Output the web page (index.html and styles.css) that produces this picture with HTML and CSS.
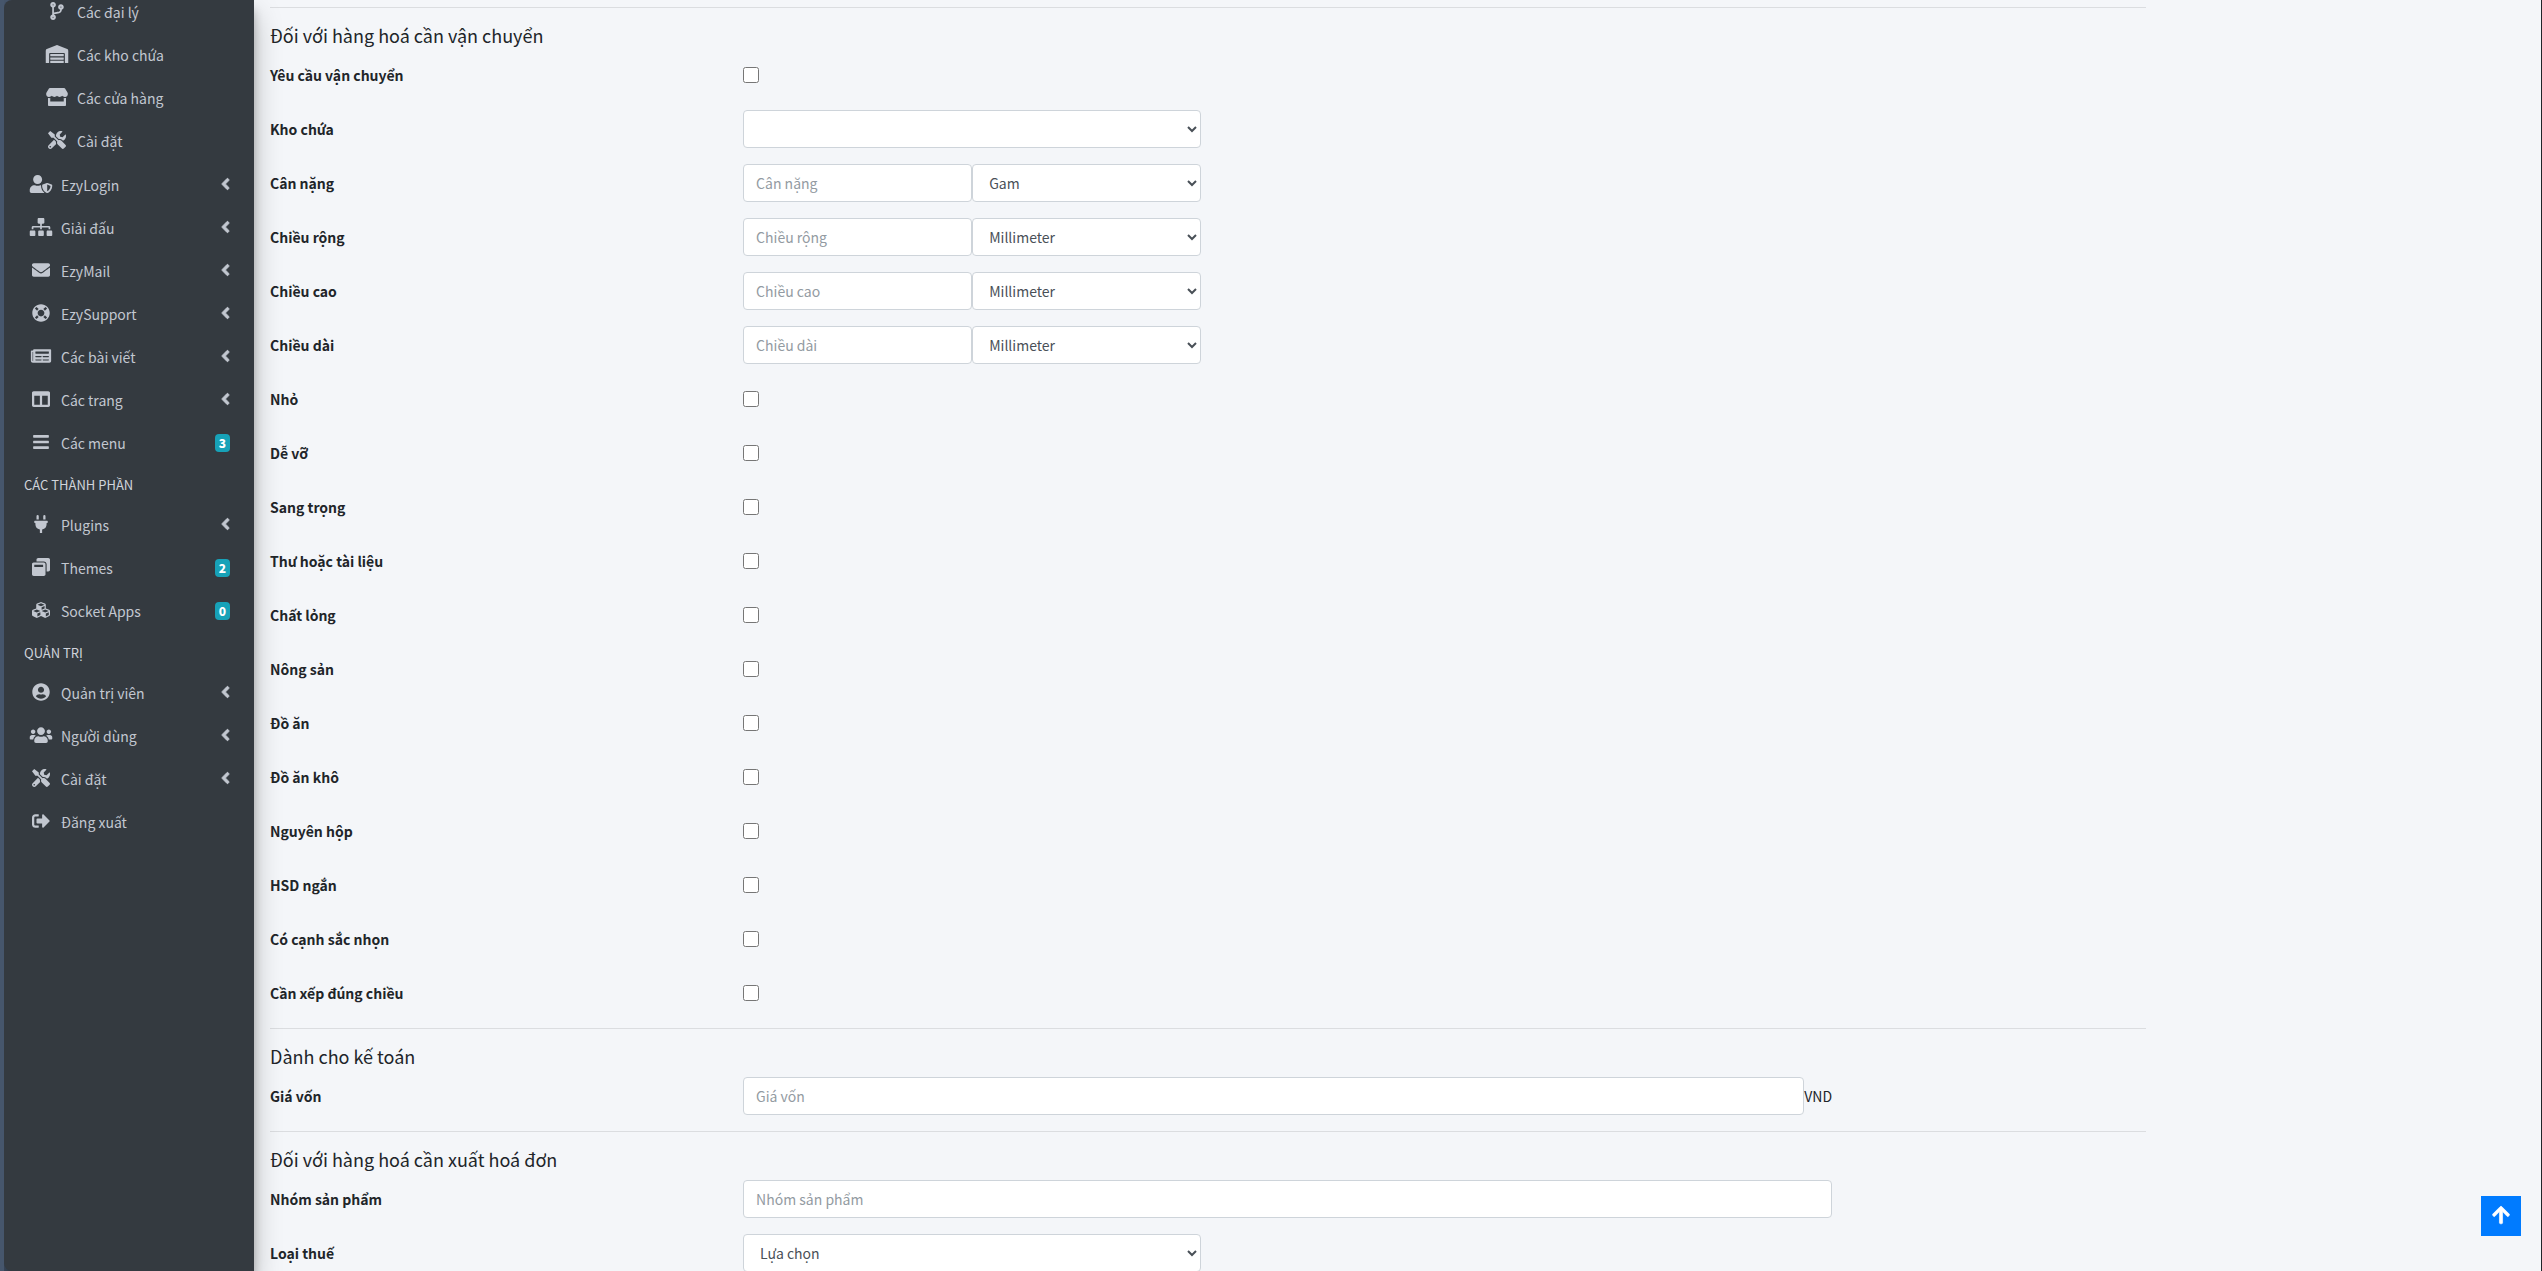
FILE: index.html
```html
<!DOCTYPE html>
<html lang="vi">
<head>
<meta charset="utf-8">
<meta name="viewport" content="width=device-width, initial-scale=1">
<title>Sản phẩm</title>
<link rel="stylesheet" href="styles.css">
</head>
<body>

<!-- icon sprite -->
<svg class="sprite" xmlns="http://www.w3.org/2000/svg">
  <symbol id="i-branch" viewBox="0 0 384 512"><path d="M384 144c0-44.200-35.800-80-80-80s-80 35.800-80 80c0 36.400 24.300 67.100 57.500 76.800-.6 16.100-4.200 28.500-11 36.900-15.400 19.200-49.300 22.400-85.200 25.700-28.200 2.600-57.400 5.400-81.300 16.900v-144c32.500-10.200 56-40.500 56-76.300 0-44.200-35.800-80-80-80S0 35.800 0 80c0 35.800 23.500 66.100 56 76.300v199.300C23.500 365.900 0 396.200 0 432c0 44.200 35.800 80 80 80s80-35.800 80-80c0-34-21.200-63.100-51.200-74.600 3.100-5.200 7.800-9.800 14.900-13.400 16.200-8.200 40.400-10.400 66.100-12.800 42.200-3.900 90-8.400 118.200-43.400 14-17.400 21.100-39.800 21.600-67.900 31.600-10.800 54.400-40.700 54.400-75.900zM80 64c8.800 0 16 7.200 16 16s-7.200 16-16 16-16-7.200-16-16 7.200-16 16-16zm0 384c-8.800 0-16-7.200-16-16s7.200-16 16-16 16 7.200 16 16-7.200 16-16 16zm224-320c8.800 0 16 7.200 16 16s-7.200 16-16 16-16-7.200-16-16 7.200-16 16-16z"/></symbol>
  <symbol id="i-warehouse" viewBox="0 0 640 512"><path d="M504 352H136.400c-4.400 0-8 3.600-8 8l-.1 48c0 4.400 3.600 8 8 8H504c4.400 0 8-3.600 8-8v-48c0-4.400-3.600-8-8-8zm0 96H136.100c-4.400 0-8 3.600-8 8l-.1 48c0 4.400 3.600 8 8 8h368c4.400 0 8-3.600 8-8v-48c0-4.400-3.600-8-8-8zm0-192H136.600c-4.400 0-8 3.600-8 8l-.1 48c0 4.400 3.600 8 8 8H504c4.400 0 8-3.600 8-8v-48c0-4.400-3.600-8-8-8zm106.500-139L338.400 3.700a48.150 48.150 0 0 0-36.900 0L29.500 117C11.700 124.500 0 141.900 0 161.300V504c0 4.400 3.600 8 8 8h80c4.400 0 8-3.600 8-8V256c0-17.600 14.600-32 32.600-32h382.800c18 0 32.600 14.400 32.600 32v248c0 4.400 3.600 8 8 8h80c4.400 0 8-3.600 8-8V161.300c0-19.400-11.700-36.800-29.500-44.300z"/></symbol>
  <symbol id="i-store" viewBox="0 0 616 512"><path d="M602 118.600L537.100 15C531.300 5.700 521 0 510 0H106C95 0 84.700 5.700 78.900 15L14 118.600c-33.500 53.500-3.800 127.900 58.800 136.400 4.500.6 9.100.9 13.700.9 29.600 0 55.800-13 73.800-33.100 18 20.100 44.300 33.100 73.800 33.100 29.600 0 55.800-13 73.800-33.100 18 20.100 44.300 33.100 73.800 33.100 29.600 0 55.800-13 73.800-33.100 18.100 20.100 44.300 33.100 73.800 33.100 4.700 0 9.200-.3 13.700-.9 62.800-8.400 92.600-82.800 59-136.400zM529.500 288c-10 0-19.900-1.500-29.500-3.800V384H116v-99.800c-9.600 2.200-19.500 3.800-29.500 3.800-6 0-12.100-.4-18-1.200-5.600-.8-11.100-2.100-16.400-3.600V480c0 17.700 14.300 32 32 32h448c17.700 0 32-14.300 32-32V283.200c-5.400 1.600-10.800 2.900-16.400 3.600-6.100.8-12.100 1.200-18.200 1.200z"/></symbol>
  <symbol id="i-tools" viewBox="0 0 512 512"><path d="M501.100 395.700L384 278.600c-23.100-23.100-57.600-27.600-85.400-13.900L192 158.100V96L64 0 0 64l96 128h62.100l106.600 106.600c-13.600 27.800-9.200 62.300 13.900 85.400l117.100 117.100c14.600 14.600 38.200 14.600 52.700 0l52.700-52.700c14.500-14.600 14.500-38.200 0-52.700zM331.700 225c28.300 0 54.900 11 74.900 31l19.400 19.400c15.800-6.900 30.800-16.500 43.800-29.500 37.100-37.100 49.700-89.300 37.900-136.700-2.200-9-13.500-12.100-20.100-5.500l-74.400 74.400-67.900-11.300L334 98.900l74.400-74.400c6.600-6.600 3.400-17.900-5.700-20.200-47.400-11.700-99.600.9-136.600 37.900-28.500 28.500-41.900 66.100-41.200 103.600l82.100 82.100c8.100-1.900 16.500-2.900 24.700-2.900zm-103.900 82l-56.700-56.700L18.700 402.800c-25 25-25 65.500 0 90.500s65.500 25 90.500 0l123.600-123.600c-7.600-19.900-9.900-41.600-5-62.700zM64 472c-13.200 0-24-10.800-24-24 0-13.300 10.700-24 24-24s24 10.700 24 24c0 13.200-10.700 24-24 24z"/></symbol>
  <symbol id="i-user-shield" viewBox="0 0 640 512"><path d="M622.300 271.100l-115.200-45c-4.100-1.600-12.600-3.700-22.200 0l-115.200 45c-10.700 4.200-17.700 14-17.700 24.900 0 111.600 68.700 188.800 132.900 213.900 9.600 3.700 18 1.600 22.200 0C558.400 489.900 640 420.500 640 296c0-10.900-7-20.700-17.700-24.900zM496 462.400V273.300l95.500 37.300c-5.600 87.100-60.900 135.400-95.500 151.800zM224 256c70.700 0 128-57.300 128-128S294.700 0 224 0 96 57.300 96 128s57.300 128 128 128zm96 40c0-2.500.8-4.800 1.100-7.200-2.500-.1-4.900-.8-7.500-.8h-16.700c-22.200 10.200-46.900 16-72.900 16s-50.600-5.800-72.900-16h-16.700C60.200 288 0 348.200 0 422.400V464c0 26.500 21.500 48 48 48h352c6.800 0 13.300-1.500 19.200-4-54-42.900-99.200-116.700-99.200-212z"/></symbol>
  <symbol id="i-sitemap" viewBox="0 0 640 512"><path d="M128 352H32c-17.670 0-32 14.330-32 32v96c0 17.670 14.330 32 32 32h96c17.670 0 32-14.330 32-32v-96c0-17.670-14.330-32-32-32zm-24-80h192v48h48v-48h192v48h48v-57.590c0-21.170-17.230-38.410-38.410-38.410H344v-64h40c17.670 0 32-14.330 32-32V32c0-17.670-14.330-32-32-32H256c-17.670 0-32 14.330-32 32v96c0 17.670 14.330 32 32 32h40v64H94.410C73.230 224 56 241.230 56 262.410V320h48v-48zm264 80h-96c-17.670 0-32 14.330-32 32v96c0 17.670 14.330 32 32 32h96c17.670 0 32-14.330 32-32v-96c0-17.670-14.330-32-32-32zm240 0h-96c-17.670 0-32 14.330-32 32v96c0 17.670 14.330 32 32 32h96c17.670 0 32-14.330 32-32v-96c0-17.670-14.330-32-32-32z"/></symbol>
  <symbol id="i-mail" viewBox="0 0 512 512"><path d="M502.300 190.800c3.900-3.100 9.700-.2 9.700 4.700V400c0 26.500-21.500 48-48 48H48c-26.500 0-48-21.500-48-48V195.600c0-5 5.700-7.800 9.700-4.700 22.400 17.400 52.100 39.500 154.100 113.600 21.100 15.400 56.700 47.800 92.200 47.600 35.700.3 72-32.800 92.300-47.600 102-74.100 131.600-96.300 154-113.700zM256 320c23.200.4 56.600-29.200 73.400-41.400 132.700-96.300 142.800-104.700 173.400-128.700 5.800-4.500 9.200-11.500 9.200-18.900v-19c0-26.500-21.500-48-48-48H48c-26.500 0-48 21.500-48 48v19c0 7.400 3.400 14.300 9.200 18.900 30.600 23.900 40.700 32.400 173.400 128.700 16.800 12.200 50.200 41.800 73.400 41.400z"/></symbol>
  <symbol id="i-ring" viewBox="0 0 512 512"><path d="M256 8C119.033 8 8 119.033 8 256s111.033 248 248 248 248-111.033 248-248S392.967 8 256 8zm173.696 119.559l-63.399 63.399c-10.987-18.559-26.670-34.252-45.255-45.255l63.399-63.399a218.396 218.396 0 0 1 45.255 45.255zM256 352c-53.019 0-96-42.981-96-96s42.981-96 96-96 96 42.981 96 96-42.981 96-96 96zM127.559 82.304l63.399 63.399c-18.559 10.987-34.252 26.670-45.255 45.255l-63.399-63.399a218.372 218.372 0 0 1 45.255-45.255zM82.304 384.441l63.399-63.399c10.987 18.559 26.670 34.252 45.255 45.255l-63.399 63.399a218.396 218.396 0 0 1-45.255-45.255zm302.137 45.255l-63.399-63.399c18.559-10.987 34.252-26.670 45.255-45.255l63.399 63.399a218.403 218.403 0 0 1-45.255 45.255z"/></symbol>
  <symbol id="i-news" viewBox="0 0 576 512"><path d="M552 64H88c-13.255 0-24 10.745-24 24v8H24c-13.255 0-24 10.745-24 24v272c0 30.928 25.072 56 56 56h472c26.510 0 48-21.490 48-48V88c0-13.255-10.745-24-24-24zM56 400a8 8 0 0 1-8-8V144h16v248a8 8 0 0 1-8 8zm236-16H140c-6.627 0-12-5.373-12-12v-8c0-6.627 5.373-12 12-12h152c6.627 0 12 5.373 12 12v8c0 6.627-5.373 12-12 12zm208 0H348c-6.627 0-12-5.373-12-12v-8c0-6.627 5.373-12 12-12h152c6.627 0 12 5.373 12 12v8c0 6.627-5.373 12-12 12zm-208-96H140c-6.627 0-12-5.373-12-12v-8c0-6.627 5.373-12 12-12h152c6.627 0 12 5.373 12 12v8c0 6.627-5.373 12-12 12zm208 0H348c-6.627 0-12-5.373-12-12v-8c0-6.627 5.373-12 12-12h152c6.627 0 12 5.373 12 12v8c0 6.627-5.373 12-12 12zm0-96H140c-6.627 0-12-5.373-12-12v-40c0-6.627 5.373-12 12-12h360c6.627 0 12 5.373 12 12v40c0 6.627-5.373 12-12 12z"/></symbol>
  <symbol id="i-columns" viewBox="0 0 512 512"><path d="M464 32H48C21.490 32 0 53.490 0 80v352c0 26.510 21.490 48 48 48h416c26.510 0 48-21.490 48-48V80c0-26.510-21.490-48-48-48zM224 416H64V160h160v256zm224 0H288V160h160v256z"/></symbol>
  <symbol id="i-bars" viewBox="0 0 448 512"><path d="M16 132h416c8.837 0 16-7.163 16-16V76c0-8.837-7.163-16-16-16H16C7.163 60 0 67.163 0 76v40c0 8.837 7.163 16 16 16zm0 160h416c8.837 0 16-7.163 16-16v-40c0-8.837-7.163-16-16-16H16c-8.837 0-16 7.163-16 16v40c0 8.837 7.163 16 16 16zm0 160h416c8.837 0 16-7.163 16-16v-40c0-8.837-7.163-16-16-16H16c-8.837 0-16 7.163-16 16v40c0 8.837 7.163 16 16 16z"/></symbol>
  <symbol id="i-plug" viewBox="0 0 384 512"><path d="M320 32a32 32 0 0 0-64 0v96h64zm48 128H16a16 16 0 0 0-16 16v32a16 16 0 0 0 16 16h16v32a160.070 160.070 0 0 0 128 156.800V512h64v-99.200A160.070 160.070 0 0 0 352 256v-32h16a16 16 0 0 0 16-16v-32a16 16 0 0 0-16-16zM128 32a32 32 0 0 0-64 0v96h64z"/></symbol>
  <symbol id="i-windows" viewBox="0 0 512 512"><path d="M512 48v288c0 26.500-21.500 48-48 48h-48V176c0-44.100-35.900-80-80-80H128V48c0-26.500 21.500-48 48-48h288c26.500 0 48 21.500 48 48zM384 176v288c0 26.500-21.500 48-48 48H48c-26.500 0-48-21.500-48-48V176c0-26.500 21.500-48 48-48h288c26.500 0 48 21.500 48 48zm-68 28c0-6.600-5.400-12-12-12H76c-6.600 0-12 5.400-12 12v52h252v-52z"/></symbol>
  <symbol id="i-cubes" viewBox="0 0 512 512"><path d="M488.600 250.200L392 214V105.500c0-15-9.300-28.400-23.400-33.700l-100-37.500c-8.100-3.100-17.100-3.100-25.300 0l-100 37.500c-14.100 5.300-23.400 18.700-23.400 33.700V214l-96.600 36.200C9.300 255.500 0 268.900 0 283.900V394c0 13.600 7.700 26.100 19.900 32.200l100 50c10.100 5.100 22.100 5.100 32.200 0l103.900-52 103.900 52c10.100 5.100 22.100 5.100 32.200 0l100-50c12.200-6.100 19.900-18.600 19.900-32.200V283.900c0-15-9.300-28.400-23.400-33.700zM358 214.800l-85 31.900v-68.200l85-37v73.300zM154 104.100l102-38.200 102 38.200v.6l-102 41.400-102-41.400v-.6zm84 291.100l-85 42.500v-79.100l85-38.800v75.400zm0-112l-102 41.400-102-41.400v-.6l102-38.200 102 38.200v.6zm240 112l-85 42.500v-79.100l85-38.800v75.400zm0-112l-102 41.400-102-41.400v-.6l102-38.200 102 38.200v.6z"/></symbol>
  <symbol id="i-user" viewBox="0 0 496 512"><path d="M248 8C111 8 0 119 0 256s111 248 248 248 248-111 248-248S385 8 248 8zm0 96c48.600 0 88 39.400 88 88s-39.400 88-88 88-88-39.400-88-88 39.400-88 88-88zm0 344c-58.700 0-111.300-26.600-146.500-68.200 18.800-35.400 55.600-59.800 98.500-59.800 2.400 0 4.800.4 7.100 1.100 13 4.200 26.600 6.900 40.900 6.900 14.300 0 28-2.700 40.900-6.900 2.300-.7 4.700-1.100 7.100-1.100 42.900 0 79.700 24.400 98.500 59.800C359.300 421.400 306.700 448 248 448z"/></symbol>
  <symbol id="i-users" viewBox="0 0 640 512"><path d="M96 224c35.300 0 64-28.700 64-64s-28.700-64-64-64-64 28.700-64 64 28.700 64 64 64zm448 0c35.300 0 64-28.700 64-64s-28.700-64-64-64-64 28.700-64 64 28.700 64 64 64zm32 32h-64c-17.600 0-33.500 7.100-45.100 18.600 40.300 22.100 68.900 62 75.100 109.400h66c17.700 0 32-14.300 32-32v-32c0-35.300-28.700-64-64-64zm-256 0c61.900 0 112-50.100 112-112S381.900 32 320 32 208 82.100 208 144s50.100 112 112 112zm76.800 32h-8.300c-20.800 10-43.900 16-68.500 16s-47.600-6-68.500-16h-8.300C179.600 288 128 339.600 128 403.200V432c0 26.500 21.500 48 48 48h288c26.500 0 48-21.500 48-48v-28.800c0-63.600-51.600-115.200-115.200-115.200zm-223.700-13.400C161.500 263.100 145.600 256 128 256H64c-35.300 0-64 28.700-64 64v32c0 17.700 14.300 32 32 32h65.900c6.300-47.400 34.900-87.300 75.200-109.400z"/></symbol>
  <symbol id="i-signout" viewBox="0 0 512 512"><path d="M497 273L329 441c-15 15-41 4.500-41-17v-96H152c-13.300 0-24-10.700-24-24v-96c0-13.300 10.700-24 24-24h136V88c0-21.400 25.900-32 41-17l168 168c9.300 9.400 9.300 24.600 0 34zM192 436v-40c0-6.600-5.400-12-12-12H96c-17.700 0-32-14.300-32-32V160c0-17.700 14.300-32 32-32h84c6.600 0 12-5.400 12-12V76c0-6.600-5.400-12-12-12H96c-53 0-96 43-96 96v192c0 53 43 96 96 96h84c6.600 0 12-5.400 12-12z"/></symbol>
  <symbol id="i-angle" viewBox="0 0 256 512"><path d="M31.700 239l136-136c9.400-9.400 24.600-9.400 33.900 0l22.600 22.600c9.400 9.400 9.400 24.600 0 33.900L127.900 256l96.400 96.400c9.400 9.400 9.400 24.600 0 33.900L201.700 409c-9.400 9.400-24.600 9.400-33.900 0l-136-136c-9.500-9.400-9.500-24.600-.1-34z"/></symbol>
  <symbol id="i-up" viewBox="0 0 448 512"><path d="M34.900 289.500l-22.200-22.200c-9.400-9.400-9.400-24.600 0-33.900L207 39c9.400-9.400 24.600-9.400 33.900 0l194.300 194.300c9.400 9.400 9.400 24.600 0 33.900L413 289.400c-9.500 9.500-25 9.300-34.300-.4L264 168.600V456c0 13.300-10.700 24-24 24h-32c-13.300 0-24-10.700-24-24V168.600L69.200 289.100c-9.300 9.800-24.800 10-34.300.4z"/></symbol>
</svg>

<div class="wrapper">
  <aside class="sidebar">
    <nav>
      <ul class="nav nav-sub">
        <li><a class="nav-link" href="#"><svg class="icon"><use href="#i-branch"/></svg><span>Các đại lý</span></a></li>
        <li><a class="nav-link" href="#"><svg class="icon"><use href="#i-warehouse"/></svg><span>Các kho chứa</span></a></li>
        <li><a class="nav-link" href="#"><svg class="icon"><use href="#i-store"/></svg><span>Các cửa hàng</span></a></li>
        <li><a class="nav-link" href="#"><svg class="icon"><use href="#i-tools"/></svg><span>Cài đặt</span></a></li>
      </ul>
      <ul class="nav">
        <li><a class="nav-link" href="#"><svg class="icon"><use href="#i-user-shield"/></svg><span>EzyLogin</span><svg class="angle"><use href="#i-angle"/></svg></a></li>
        <li><a class="nav-link" href="#"><svg class="icon"><use href="#i-sitemap"/></svg><span>Giải đấu</span><svg class="angle"><use href="#i-angle"/></svg></a></li>
        <li><a class="nav-link" href="#"><svg class="icon"><use href="#i-mail"/></svg><span>EzyMail</span><svg class="angle"><use href="#i-angle"/></svg></a></li>
        <li><a class="nav-link" href="#"><svg class="icon"><use href="#i-ring"/></svg><span>EzySupport</span><svg class="angle"><use href="#i-angle"/></svg></a></li>
        <li><a class="nav-link" href="#"><svg class="icon"><use href="#i-news"/></svg><span>Các bài viết</span><svg class="angle"><use href="#i-angle"/></svg></a></li>
        <li><a class="nav-link" href="#"><svg class="icon"><use href="#i-columns"/></svg><span>Các trang</span><svg class="angle"><use href="#i-angle"/></svg></a></li>
        <li><a class="nav-link" href="#"><svg class="icon"><use href="#i-bars"/></svg><span>Các menu</span><b class="badge">3</b></a></li>
        <li class="nav-header">CÁC THÀNH PHẦN</li>
        <li><a class="nav-link" href="#"><svg class="icon"><use href="#i-plug"/></svg><span>Plugins</span><svg class="angle"><use href="#i-angle"/></svg></a></li>
        <li><a class="nav-link" href="#"><svg class="icon"><use href="#i-windows"/></svg><span>Themes</span><b class="badge">2</b></a></li>
        <li><a class="nav-link" href="#"><svg class="icon"><use href="#i-cubes"/></svg><span>Socket Apps</span><b class="badge">0</b></a></li>
        <li class="nav-header">QUẢN TRỊ</li>
        <li><a class="nav-link" href="#"><svg class="icon"><use href="#i-user"/></svg><span>Quản trị viên</span><svg class="angle"><use href="#i-angle"/></svg></a></li>
        <li><a class="nav-link" href="#"><svg class="icon"><use href="#i-users"/></svg><span>Người dùng</span><svg class="angle"><use href="#i-angle"/></svg></a></li>
        <li><a class="nav-link" href="#"><svg class="icon"><use href="#i-tools"/></svg><span>Cài đặt</span><svg class="angle"><use href="#i-angle"/></svg></a></li>
        <li><a class="nav-link" href="#"><svg class="icon"><use href="#i-signout"/></svg><span>Đăng xuất</span></a></li>
      </ul>
    </nav>
  </aside>

  <main class="content">
    <form class="product-form">
      <section class="form-section">
        <h5>Đối với hàng hoá cần vận chuyển</h5>
        <div class="form-row"><label for="shipping">Yêu cầu vận chuyển</label><div class="field"><input type="checkbox" id="shipping"></div></div>
        <div class="form-row"><label for="warehouse">Kho chứa</label><div class="field"><select class="form-control" id="warehouse"><option></option></select></div></div>
        <div class="form-row">
          <label for="weight">Cân nặng</label>
          <div class="field">
            <input class="form-control" type="text" id="weight" placeholder="Cân nặng">
            <select class="form-control" aria-label="Cân nặng"><option>Gam</option></select>
          </div>
        </div>
        <div class="form-row">
          <label for="width">Chiều rộng</label>
          <div class="field">
            <input class="form-control" type="text" id="width" placeholder="Chiều rộng">
            <select class="form-control" aria-label="Chiều rộng"><option>Millimeter</option></select>
          </div>
        </div>
        <div class="form-row">
          <label for="height">Chiều cao</label>
          <div class="field">
            <input class="form-control" type="text" id="height" placeholder="Chiều cao">
            <select class="form-control" aria-label="Chiều cao"><option>Millimeter</option></select>
          </div>
        </div>
        <div class="form-row">
          <label for="length">Chiều dài</label>
          <div class="field">
            <input class="form-control" type="text" id="length" placeholder="Chiều dài">
            <select class="form-control" aria-label="Chiều dài"><option>Millimeter</option></select>
          </div>
        </div>
        <div class="form-row"><label for="small">Nhỏ</label><div class="field"><input type="checkbox" id="small"></div></div>
        <div class="form-row"><label for="fragile">Dễ vỡ</label><div class="field"><input type="checkbox" id="fragile"></div></div>
        <div class="form-row"><label for="luxury">Sang trọng</label><div class="field"><input type="checkbox" id="luxury"></div></div>
        <div class="form-row"><label for="document">Thư hoặc tài liệu</label><div class="field"><input type="checkbox" id="document"></div></div>
        <div class="form-row"><label for="liquid">Chất lỏng</label><div class="field"><input type="checkbox" id="liquid"></div></div>
        <div class="form-row"><label for="agricultural">Nông sản</label><div class="field"><input type="checkbox" id="agricultural"></div></div>
        <div class="form-row"><label for="food">Đồ ăn</label><div class="field"><input type="checkbox" id="food"></div></div>
        <div class="form-row"><label for="dry-food">Đồ ăn khô</label><div class="field"><input type="checkbox" id="dry-food"></div></div>
        <div class="form-row"><label for="full-box">Nguyên hộp</label><div class="field"><input type="checkbox" id="full-box"></div></div>
        <div class="form-row"><label for="short-expiry">HSD ngắn</label><div class="field"><input type="checkbox" id="short-expiry"></div></div>
        <div class="form-row"><label for="sharp">Có cạnh sắc nhọn</label><div class="field"><input type="checkbox" id="sharp"></div></div>
        <div class="form-row"><label for="upright">Cần xếp đúng chiều</label><div class="field"><input type="checkbox" id="upright"></div></div>
      </section>

      <section class="form-section">
        <h5>Dành cho kế toán</h5>
        <div class="form-row"><label for="cost">Giá vốn</label><div class="field field-wide"><input class="form-control" type="text" id="cost" placeholder="Giá vốn"><span>VND</span></div></div>
      </section>

      <section class="form-section">
        <h5>Đối với hàng hoá cần xuất hoá đơn</h5>
        <div class="form-row"><label for="group">Nhóm sản phẩm</label><div class="field field-wide"><input class="form-control" type="text" id="group" placeholder="Nhóm sản phẩm"></div></div>
        <div class="form-row"><label for="tax">Loại thuế</label><div class="field"><select class="form-control" id="tax"><option>Lựa chọn</option></select></div></div>
      </section>
    </form>
  </main>
</div>

<button class="back-to-top" type="button" aria-label="Lên đầu trang"><svg><use href="#i-up"/></svg></button>

</body>
</html>
```
FILE: styles.css
```css
* {
  box-sizing: border-box;
}

body {
  margin: 0;
  background-color: #46566c;
  color: #212529;
  font-family: 'Noto Sans CJK SC', 'Noto Sans', sans-serif;
  font-size: 14px;
  line-height: 24px;
}

.sprite {
  display: none;
}

.wrapper {
  display: flex;
  height: 100vh;
  overflow: hidden;
  border-left: 4px solid #46566c;
  border-right: 1px solid #212529;
}

/* sidebar */
.sidebar {
  flex: none;
  width: 250px;
  padding: 0 8px;
  background-color: #343a40;
  border-radius: 8px 0 0 8px;
  box-shadow: 0 14px 28px rgba(0,0,0,0.25), 0 10px 10px rgba(0,0,0,0.22);
  position: relative;
  z-index: 1;
}

.sidebar nav {
  display: flex;
  flex-direction: column;
  gap: 4px;
  margin-top: -8px;
}

.nav {
  display: flex;
  flex-direction: column;
  gap: 3px;
  margin: 0;
  padding: 0;
  list-style: none;
}

.nav-link {
  display: flex;
  align-items: center;
  height: 40px;
  padding: 0 16px;
  color: #c2c7d0;
  text-decoration: none;
}

.nav-sub .nav-link {
  padding-left: 32px;
}

.icon {
  flex: none;
  width: 26px;
  height: 18px;
  margin: 0 7px 2px 0;
  fill: currentColor;
}

.angle {
  width: 9px;
  height: 18px;
  margin: 0 0 3px auto;
  fill: currentColor;
  stroke: currentColor;
  stroke-width: 20px;
}

.badge {
  margin-left: auto;
  padding: 0 4px;
  border-radius: 4px;
  background-color: #17a2b8;
  color: #fff;
  font-size: 12px;
  font-weight: 900;
  line-height: 18px;
}

.nav-header {
  height: 36px;
  padding: 7px 12px;
  color: #d0d4db;
  font-size: 13px;
}

/* form */
.content {
  flex: 1;
  padding: 7px 8px 0;
  background-color: #f4f6f9;
}

.product-form {
  width: 83.3333%;
}

.form-section {
  margin: 0 8px;
  border-top: 1px solid #dbdde0;
  padding-top: 16px;
}

h5 {
  margin: 0 0 10px;
  font-size: 18px;
  font-weight: 400;
  line-height: 22px;
}

.form-row {
  display: flex;
  align-items: center;
  height: 38px;
  margin: 0 -8px 16px;
}

.form-row label {
  width: 25%;
  padding: 0 8px;
  font-weight: 700;
}

.field {
  display: flex;
  align-items: center;
  width: 25%;
  padding: 0 7px 0 8px;
}

.field-wide {
  width: 58.3333%;
}

.field input[type="checkbox"] {
  width: 16px;
  height: 16px;
  margin: 0;
}

.form-control {
  flex: 1;
  min-width: 0;
  height: 38px;
  padding: 6px 12px;
  border: 1px solid #ced4da;
  border-radius: 4px;
  background-color: #fff;
  color: #495057;
  font: inherit;
}

.form-control::placeholder {
  color: #939ba2;
}

.back-to-top {
  display: flex;
  align-items: center;
  justify-content: center;
  position: fixed;
  right: 21px;
  bottom: 35px;
  width: 40px;
  height: 40px;
  border: 0;
  padding: 0 0 2px;
  background-color: #007bff;
  color: #fff;
}

.back-to-top svg {
  width: 18px;
  height: 20px;
  fill: currentColor;
  stroke: currentColor;
  stroke-width: 16px;
}
```
